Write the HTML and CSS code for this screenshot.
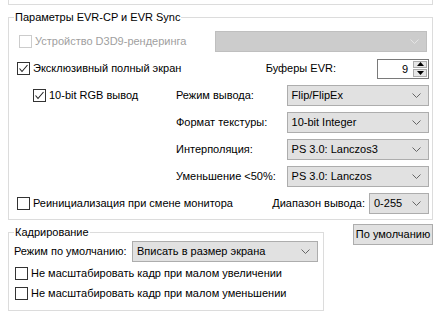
FILE: index.html
```html
<!DOCTYPE html>
<html lang="ru">
<head>
  <meta charset="UTF-8" />
  <title>Параметры EVR-CP</title>
  <link rel="stylesheet" href="styles.css">
</head>
<body>
  <div class="prev-group"></div>

  <fieldset class="group group-evr">
    <legend>Параметры EVR-CP и EVR Sync</legend>

    <div class="row row-device">
      <label class="check disabled"><span class="box"></span>Устройство D3D9-рендеринга</label>
      <div class="combo combo-off">
        <span class="value"></span>
        <svg class="chevron" width="9" height="5" viewBox="0 0 9 5"><path d="M0.5 0.5 L4.5 4.5 L8.5 0.5" fill="none" stroke="#e4e4e4" /></svg>
      </div>
    </div>

    <div class="row row-exclusive">
      <label class="check checked"><span class="box"><svg width="11" height="11" viewBox="0 0 11 11"><path d="M1.5 5.5 L4 8.5 L9.5 2" fill="none" stroke="#222" stroke-width="1.1" /></svg></span>Эксклюзивный полный экран</label>
      <span class="label label-buffers">Буферы EVR:</span>
      <div class="spin">
        <span class="spin-value">9</span>
        <div class="spin-buttons">
          <span class="spin-btn"><svg width="7" height="4" viewBox="0 0 7 4"><path d="M0 4 L3.5 0 L7 4 Z" fill="#000" /></svg></span>
          <span class="spin-btn"><svg width="7" height="4" viewBox="0 0 7 4"><path d="M0 0 L3.5 4 L7 0 Z" fill="#000" /></svg></span>
        </div>
      </div>
    </div>

    <div class="row">
      <div class="left">
        <label class="check checked sub"><span class="box"><svg width="11" height="11" viewBox="0 0 11 11"><path d="M1.5 5.5 L4 8.5 L9.5 2" fill="none" stroke="#222" stroke-width="1.1" /></svg></span>10-bit RGB вывод</label>
      </div>
      <span class="label label-field">Режим вывода:</span>
      <div class="combo combo-field">
        <span class="value">Flip/FlipEx</span>
        <svg class="chevron" width="9" height="5" viewBox="0 0 9 5"><path d="M0.5 0.5 L4.5 4.5 L8.5 0.5" fill="none" stroke="#666" /></svg>
      </div>
    </div>

    <div class="row">
      <div class="left"></div>
      <span class="label label-field">Формат текстуры:</span>
      <div class="combo combo-field">
        <span class="value">10-bit Integer</span>
        <svg class="chevron" width="9" height="5" viewBox="0 0 9 5"><path d="M0.5 0.5 L4.5 4.5 L8.5 0.5" fill="none" stroke="#666" /></svg>
      </div>
    </div>

    <div class="row">
      <div class="left"></div>
      <span class="label label-field">Интерполяция:</span>
      <div class="combo combo-field">
        <span class="value">PS 3.0: Lanczos3</span>
        <svg class="chevron" width="9" height="5" viewBox="0 0 9 5"><path d="M0.5 0.5 L4.5 4.5 L8.5 0.5" fill="none" stroke="#666" /></svg>
      </div>
    </div>

    <div class="row">
      <div class="left"></div>
      <span class="label label-field">Уменьшение &lt;50%:</span>
      <div class="combo combo-field">
        <span class="value">PS 3.0: Lanczos</span>
        <svg class="chevron" width="9" height="5" viewBox="0 0 9 5"><path d="M0.5 0.5 L4.5 4.5 L8.5 0.5" fill="none" stroke="#666" /></svg>
      </div>
    </div>

    <div class="row">
      <label class="check"><span class="box"></span>Реинициализация при смене монитора</label>
      <span class="label label-range">Диапазон вывода:</span>
      <div class="combo combo-range">
        <span class="value">0-255</span>
        <svg class="chevron" width="9" height="5" viewBox="0 0 9 5"><path d="M0.5 0.5 L4.5 4.5 L8.5 0.5" fill="none" stroke="#666" /></svg>
      </div>
    </div>
  </fieldset>

  <div class="bottom">
    <fieldset class="group group-crop">
      <legend>Кадрирование</legend>
      <div class="row">
        <span class="label">Режим по умолчанию:</span>
        <div class="combo combo-crop">
          <span class="value">Вписать в размер экрана</span>
          <svg class="chevron" width="9" height="5" viewBox="0 0 9 5"><path d="M0.5 0.5 L4.5 4.5 L8.5 0.5" fill="none" stroke="#666" /></svg>
        </div>
      </div>
      <label class="check crop-check"><span class="box"></span>Не масштабировать кадр при малом увеличении</label>
      <label class="check crop-check"><span class="box"></span>Не масштабировать кадр при малом уменьшении</label>
    </fieldset>
    <button class="button">По умолчанию</button>
  </div>
</body>
</html>
```

FILE: styles.css
```css
*, *::before, *::after { box-sizing: border-box; }

body {
  margin: 0;
  width: 443px;
  height: 314px;
  overflow: hidden;
  background: #fff;
  color: #000;
  font-family: "Liberation Sans", Arial, sans-serif;
  font-size: 11px;
  line-height: 13px;
}

.prev-group {
  height: 5px;
  width: 425px;
  margin-left: 8px;
  border: 1px solid #dcdcdc;
  border-top: none;
}

.group {
  margin: 0;
  padding: 0;
  min-width: 0;
  border: 1px solid #dcdcdc;
}

.group legend {
  padding: 0 1px;
  margin-left: 5px;
  line-height: 13px;
}

.group-evr {
  width: 425px;
  margin: 6px 0 0 8px;
  padding: 7px 3px 5px 0;
  display: flex;
  flex-direction: column;
  gap: 6px;
}

.row {
  display: flex;
  align-items: center;
  height: 21px;
}

.check {
  display: flex;
  align-items: center;
  gap: 3px;
  padding-left: 8px;
  white-space: nowrap;
}

.check.sub { padding-left: 24px; }
.check.disabled { padding-left: 10px; color: #a0a0a0; }

.box {
  width: 13px;
  height: 13px;
  border: 1px solid #333;
  background: #fff;
  display: flex;
  align-items: center;
  justify-content: center;
  flex-shrink: 0;
}

.check.disabled .box { border-color: #ccc; }

.combo {
  height: 21px;
  display: flex;
  align-items: center;
  justify-content: space-between;
  padding: 0 7px 0 4px;
  background: #e1e1e1;
  border: 1px solid #adadad;
  white-space: nowrap;
}

.combo-off {
  margin-left: auto;
  margin-right: 2px;
  width: 212px;
  background: #cccccc;
  border-color: #bfbfbf;
}

.combo-off .value { flex: 1; }

.label { white-space: nowrap; }

.label-buffers { margin-left: auto; }

.spin {
  margin-left: 41px;
  width: 52px;
  height: 20px;
  display: flex;
  border: 1px solid #7a7a7a;
  background: #fff;
}

.spin-value {
  flex: 1;
  text-align: right;
  padding-right: 4px;
  line-height: 18px;
}

.spin-buttons {
  width: 16px;
  display: flex;
  flex-direction: column;
  gap: 1px;
  padding: 1px;
}

.spin-btn {
  flex: 1;
  display: flex;
  align-items: center;
  justify-content: center;
  background: #e6e6e6;
  border: 1px solid #acacac;
}

.left { width: 167px; flex-shrink: 0; }

.label-field { width: 111px; }

.combo-field { width: 143px; }

.label-range { margin-left: auto; margin-right: 4px; }

.combo-range { width: 60px; }

.bottom {
  display: flex;
  align-items: flex-start;
  margin-top: 4px;
}

.group-crop {
  width: 316px;
  margin: 2px 0 0 8px;
  padding: 2px 5px 7px 0;
  display: flex;
  flex-direction: column;
}

.group-crop .row { padding-left: 5px; }

.combo-crop { width: 186px; margin-left: auto; }

.crop-check {
  padding-left: 6px;
  height: 20px;
}

.group-crop .row + .crop-check { margin-top: 1px; }

.button {
  margin: 0 0 0 29px;
  width: 80px;
  height: 21px;
  padding: 0;
  font: inherit;
  color: #000;
  background: #e1e1e1;
  border: 1px solid #adadad;
}
```
